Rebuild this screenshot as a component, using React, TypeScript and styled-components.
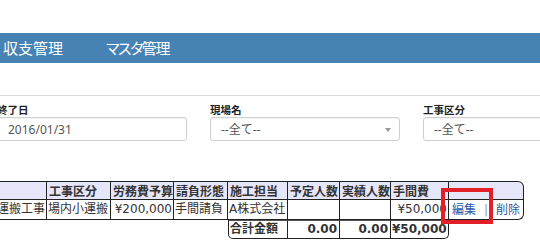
import * as React from "react";
import styled, { createGlobalStyle } from "styled-components";

const GlobalStyle = createGlobalStyle`
  html, body {
    margin: 0;
    padding: 0;
    background: #fff;
  }
  body {
    font-family: "Noto Sans CJK JP", "Noto Sans", sans-serif;
    color: #333;
  }
`;

const Page = styled.div`
  position: relative;
  width: 540px;
  height: 249px;
  overflow: hidden;
  background: #fff;
`;

const TopSpace = styled.div`
  height: 33px;
`;

const NavBar = styled.nav`
  display: flex;
  align-items: center;
  gap: 43px;
  height: 30px;
  padding-left: 3px;
  background-color: #4682b4;
`;

const NavItem = styled.span<{ $tight?: boolean }>`
  font-family: "Noto Sans CJK JP", sans-serif;
  font-size: 15px;
  line-height: 30px;
  color: #fff;
  font-feature-settings: "palt";
  letter-spacing: ${(p) => (p.$tight ? "-1.4px" : "0")};
`;

const FilterSection = styled.section`
  margin-top: 32px;
  border-top: 1px solid #dcdcdc;
  padding-top: 6px;
  display: flex;
  gap: 23px;
  margin-left: -3px;
`;

const Field = styled.div`
  display: flex;
  flex-direction: column;
  flex: 0 0 190px;
`;

const Label = styled.label`
  font-family: "Noto Sans CJK JP", sans-serif;
  font-size: 10.5px;
  font-weight: bold;
  line-height: 15px;
  color: #222;
`;

const InputBox = styled.div`
  position: relative;
  box-sizing: border-box;
  height: 24px;
  border: 1px solid #cfcfcf;
  border-radius: 3px;
  background: #fff;
  box-shadow: inset 0 1px 1px rgba(0, 0, 0, 0.05);
  padding: 0 0 0 10px;
  display: flex;
  align-items: center;
  font-family: "Noto Sans", "Noto Sans CJK JP", sans-serif;
  font-size: 12px;
  color: #555;
`;

const Arrow = styled.span`
  position: absolute;
  right: 8px;
  top: 10px;
  width: 0;
  height: 0;
  border-left: 3px solid transparent;
  border-right: 3px solid transparent;
  border-top: 4px solid #999;
`;

const TableSection = styled.div`
  margin-top: 40px;
  margin-left: -5px;
`;

const Table = styled.table`
  width: 529px;
  border-collapse: separate;
  border-spacing: 0;
  table-layout: fixed;
  font-family: "DejaVu Sans", "Noto Sans CJK JP", sans-serif;
  font-size: 12px;
  color: #333;
`;

const Th = styled.th<{ $w: number; $last?: boolean; $first?: boolean }>`
  box-sizing: border-box;
  width: ${(p) => p.$w}px;
  background: #e6e6fa;
  font-family: "Noto Sans CJK JP", sans-serif;
  font-weight: bold;
  text-align: left;
  padding: 0 2px;
  line-height: 17px;
  white-space: nowrap;
  overflow: hidden;
  border-top: 1px solid #222;
  border-right: 1px solid #222;
  border-bottom: 1px solid #222;
  border-left: ${(p) => (p.$first ? "1px solid #222" : "none")};
  border-top-right-radius: ${(p) => (p.$last ? "6px" : "0")};
`;

const Td = styled.td<{ $right?: boolean; $first?: boolean; $last?: boolean }>`
  box-sizing: border-box;
  padding: 0 1px 0 1px;
  line-height: 17px;
  white-space: nowrap;
  overflow: hidden;
  text-align: ${(p) => (p.$right ? "right" : "left")};
  border-right: 1px solid #222;
  border-bottom: 1px solid #222;
  border-left: ${(p) => (p.$first ? "1px solid #222" : "none")};
  border-bottom-right-radius: ${(p) => (p.$last ? "6px" : "0")};
`;

const ActionCell = styled(Td)`
  padding-left: 3px;
`;

const TotalTd = styled.td<{ $right?: boolean; $first?: boolean; $last?: boolean }>`
  box-sizing: border-box;
  padding: 0 2px 0 1px;
  line-height: 17px;
  font-weight: bold;
  white-space: nowrap;
  overflow: hidden;
  text-align: ${(p) => (p.$right ? "right" : "left")};
  border-top: 1px solid #555;
  border-right: 1px solid #222;
  border-bottom: 1px solid #222;
  border-left: ${(p) => (p.$first ? "1px solid #222" : "none")};
  border-bottom-left-radius: ${(p) => (p.$first ? "5px" : "0")};
  border-bottom-right-radius: ${(p) => (p.$last ? "5px" : "0")};
`;

const EmptyTd = styled.td`
  padding: 0;
  border: none;
`;

const ActionLink = styled.a`
  font-family: "Noto Sans CJK JP", sans-serif;
  color: #2a56a5;
  text-decoration: none;
`;

const Sep = styled.span`
  color: #999;
  margin: 0 8px;
`;

const Highlight = styled.div`
  position: absolute;
  left: 441px;
  top: 188px;
  width: 52px;
  height: 36px;
  box-sizing: border-box;
  border: 4px solid #e3202a;
  pointer-events: none;
`;

const columns = [
  { label: "", w: 52 },
  { label: "工事区分", w: 64 },
  { label: "労務費予算", w: 63 },
  { label: "請負形態", w: 54 },
  { label: "施工担当", w: 60 },
  { label: "予定人数", w: 52 },
  { label: "実績人数", w: 51 },
  { label: "手間費", w: 58 },
  { label: "", w: 75 },
];

export default function App() {
  return (
    <Page>
      <GlobalStyle />
      <TopSpace />
      <NavBar>
        <NavItem>収支管理</NavItem>
        <NavItem $tight>マスタ管理</NavItem>
      </NavBar>

      <FilterSection>
        <Field>
          <Label>終了日</Label>
          <InputBox>2016/01/31</InputBox>
        </Field>
        <Field>
          <Label>現場名</Label>
          <InputBox>
            --全て--
            <Arrow />
          </InputBox>
        </Field>
        <Field>
          <Label>工事区分</Label>
          <InputBox>--全て--</InputBox>
        </Field>
      </FilterSection>

      <TableSection>
        <Table>
          <thead>
            <tr>
              {columns.map((c, i) => (
                <Th
                  key={i}
                  $w={c.w}
                  $first={i === 0}
                  $last={i === columns.length - 1}
                >
                  {c.label}
                </Th>
              ))}
            </tr>
          </thead>
          <tbody>
            <tr>
              <Td $first>運搬工事</Td>
              <Td>場内小運搬</Td>
              <Td $right>¥200,000</Td>
              <Td>手間請負</Td>
              <Td>A株式会社</Td>
              <Td></Td>
              <Td></Td>
              <Td $right>¥50,000</Td>
              <ActionCell $last>
                <ActionLink href="#">編集</ActionLink>
                <Sep>|</Sep>
                <ActionLink href="#">削除</ActionLink>
              </ActionCell>
            </tr>
            <tr>
              <EmptyTd />
              <EmptyTd />
              <EmptyTd />
              <EmptyTd />
              <TotalTd $first>合計金額</TotalTd>
              <TotalTd $right>0.00</TotalTd>
              <TotalTd $right>0.00</TotalTd>
              <TotalTd $right $last>¥50,000</TotalTd>
              <EmptyTd />
            </tr>
          </tbody>
        </Table>
      </TableSection>

      <Highlight />
    </Page>
  );
}
